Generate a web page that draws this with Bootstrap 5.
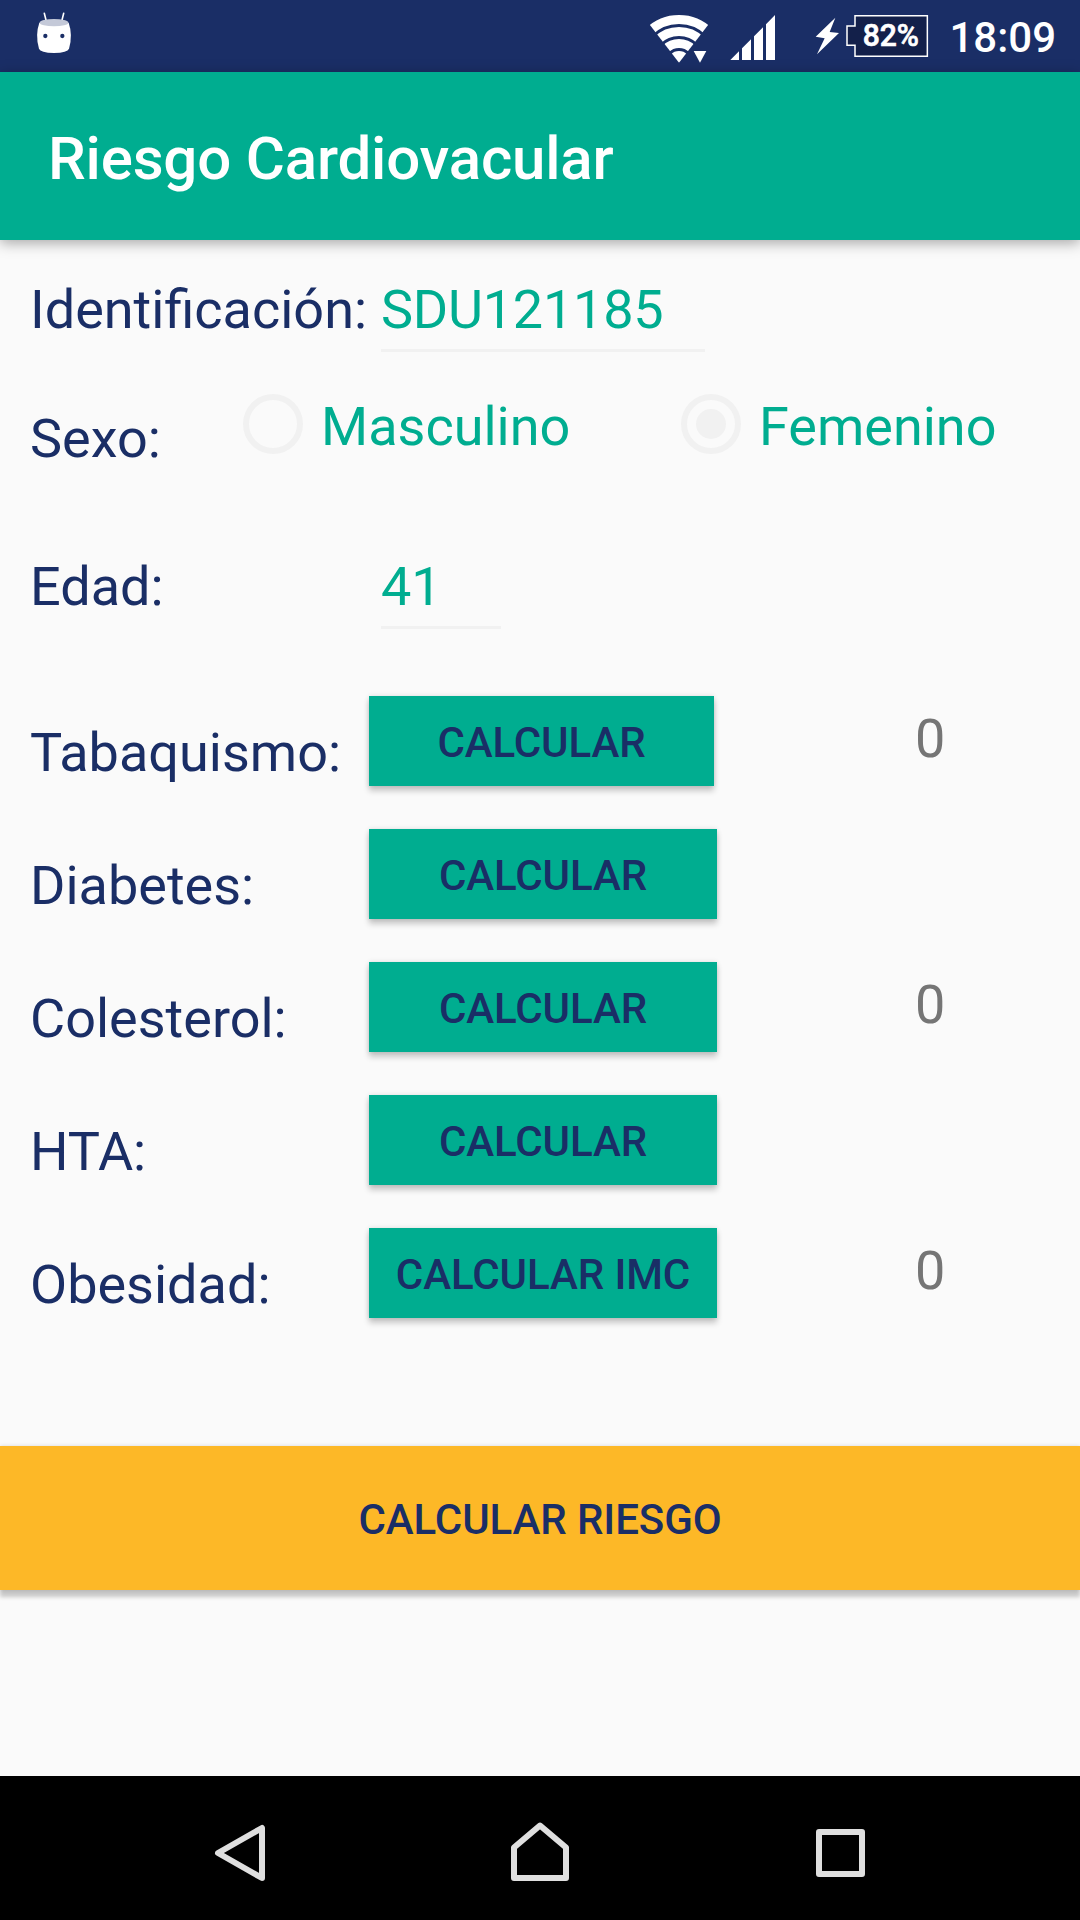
<!DOCTYPE html>
<html lang="es">
<head>
<meta charset="utf-8">
<meta name="viewport" content="width=device-width, initial-scale=1">
<title>Riesgo Cardiovacular</title>
<link rel="stylesheet" href="https://cdn.jsdelivr.net/npm/bootstrap@5.3.0/dist/css/bootstrap.min.css">
<style>
  :root { --navy: #1a2e66; --green: #00ad90; --amber: #fdb827; --hairline: #f1f1f1; }
  body { font-family: Roboto, "Noto Sans", sans-serif; background: #fafafa; color: var(--navy); font-size: 54px; line-height: 64px; height: 1920px; overflow: hidden; }
  svg { display: block; flex: none; }
  .status-bar { height: 72px; background: var(--navy); padding: 0 24px 0 35px; }
  .clock { font-size: 42px; font-weight: 500; line-height: 48px; padding-top: 14px; margin-left: 13px; }
  .app-bar { height: 168px; background: var(--green); padding: 6px 48px 0; box-shadow: 0 3px 13px rgba(0,0,0,.34); z-index: 1; }
  .app-title { font-size: 60px; font-weight: 500; line-height: 72px; letter-spacing: -.18px; }
  .form-area { height: 1206px; padding-left: 30px; }
  .lbl { width: 339px; }
  .id-row { height: 150px; padding-top: 38px; }
  .sex-row { height: 165px; padding-top: 1px; }
  .age-row { height: 141px; }
  .calc-row { height: 133px; }
  .calc-row .lbl { padding-top: 25px; }
  .score { padding-top: 11px; margin-left: auto; width: 165px; color: #757575; }
  .field { margin-left: 12px; color: var(--green); border-bottom: 3px solid var(--hairline); height: 74px; }
  .field-id { width: 324px; letter-spacing: -.25px; }
  .field-age { width: 120px; }
  .sex-lbl { width: 213px; }
  .choice { width: 438px; color: var(--green); padding-top: 3px; }
  .choice:last-child { width: 380px; }
  .choice-txt { padding: 1px 0 0 18px; }
  .dot-ring { width: 60px; height: 60px; border: 6px solid var(--hairline); border-radius: 50%; }
  .dot-core { width: 30px; height: 30px; background: var(--hairline); border-radius: 50%; }
  .flat-btn { font-size: 42px; font-weight: 500; line-height: 48px; letter-spacing: -.08px; color: var(--navy); border: 0; border-radius: 0; padding: 0; }
  .calc-btn { width: 348px; height: 90px; background: var(--green); padding-top: 3px; box-shadow: 0 5px 6px rgba(0,0,0,.2), 0 0 5px rgba(0,0,0,.12); }
  .calc-btn.first { width: 345px; }
  .risk-btn { height: 144px; background: var(--amber); padding-top: 3px; box-shadow: 0 7px 4px rgba(0,0,0,.2), 0 0 4px rgba(0,0,0,.14); }
  .nav-keys { height: 144px; background: #000; padding: 8px 214px 0; }
</style>
</head>
<body class="d-flex flex-column m-0">
  <header class="status-bar d-flex align-items-start text-white flex-shrink-0">
    <svg width="38" height="54" viewBox="105 0 114 162">
      <g stroke="#fff" stroke-width="5" stroke-linecap="round"><path d="M133 40l6 24M191 40l-6 24"/></g>
      <path fill="#fff" d="M118 68Q105 105 117 146Q121 158 162 159Q203 158 207 146Q219 105 206 68Z"/>
      <ellipse cx="162" cy="68" rx="43" ry="11" fill="#c4c9d8"/>
      <circle cx="136" cy="108" r="6.500" fill="#1a2e66"/><circle cx="187" cy="108" r="6.500" fill="#1a2e66"/>
    </svg>
    <div class="d-flex ms-auto">
      <svg width="306" height="72" viewBox="0 0 918 216">
        <defs><clipPath id="fan"><path d="M147 188L31.500 38L31.500 0H262.500V38Z"/></clipPath></defs>
        <g clip-path="url(#fan)" fill="none" stroke="#fff" stroke-width="27">
          <circle cx="147" cy="188" r="129.500"/><circle cx="147" cy="188" r="93.500"/><circle cx="147" cy="188" r="57.500"/>
          <circle cx="147" cy="188" r="35" fill="#fff" stroke="none"/>
        </g>
        <g fill="#fff">
          <path d="M191 153H229L210 188Z"/>
          <path d="M301 180L327 154V180ZM336 145L363 118V180H336ZM372 109L399 82V180H372ZM408 73L435 45V180H408Z"/>
          <path d="M616 53L557 110L584 115L561 163L627 99L599 96Z"/>
        </g>
        <path d="M675 47H892V168.500H675V136H651V78H675Z" fill="#13204a" stroke="#fff" stroke-width="4.500"/>
        <text x="698" y="139" font-size="94" font-weight="500" fill="#fff" stroke="#fff" stroke-width="2" textLength="169" lengthAdjust="spacingAndGlyphs">82%</text>
      </svg>
      <span class="clock">18:09</span>
    </div>
  </header>
  <nav class="app-bar d-flex align-items-center text-white flex-shrink-0">
    <span class="app-title">Riesgo Cardiovacular</span>
  </nav>
  <main class="form-area flex-shrink-0">
    <div class="id-row d-flex align-items-start"><span class="lbl text-nowrap">Identificación:</span><span class="field field-id">SDU121185</span></div>
    <div class="sex-row d-flex align-items-start">
      <span class="sex-lbl pt-3 flex-shrink-0">Sexo:</span>
      <div class="d-flex">
        <div class="choice d-flex align-items-start flex-shrink-0"><span class="dot-ring"></span><span class="choice-txt">Masculino</span></div>
        <div class="choice d-flex align-items-start"><span class="dot-ring d-flex align-items-center justify-content-center"><span class="dot-core"></span></span><span class="choice-txt">Femenino</span></div>
      </div>
    </div>
    <div class="age-row d-flex align-items-start"><span class="lbl">Edad:</span><span class="field field-age">41</span></div>
    <div class="calc-row d-flex align-items-start"><span class="lbl">Tabaquismo:</span><button class="btn flat-btn calc-btn first">CALCULAR</button><span class="score">0</span></div>
    <div class="calc-row d-flex align-items-start"><span class="lbl">Diabetes:</span><button class="btn flat-btn calc-btn">CALCULAR</button></div>
    <div class="calc-row d-flex align-items-start"><span class="lbl">Colesterol:</span><button class="btn flat-btn calc-btn">CALCULAR</button><span class="score">0</span></div>
    <div class="calc-row d-flex align-items-start"><span class="lbl">HTA:</span><button class="btn flat-btn calc-btn">CALCULAR</button></div>
    <div class="calc-row d-flex align-items-start"><span class="lbl">Obesidad:</span><button class="btn flat-btn calc-btn">CALCULAR IMC</button><span class="score">0</span></div>
  </main>
  <button class="btn flat-btn risk-btn w-100 flex-shrink-0">CALCULAR RIESGO</button>
  <footer class="nav-keys d-flex align-items-center justify-content-between mt-auto flex-shrink-0">
    <svg width="52" height="58" viewBox="214 1823 52 58" fill="none" stroke="#dfdfdf" stroke-width="6" stroke-linejoin="round"><path d="M218 1853L262 1828V1878Z"/></svg>
    <svg width="60" height="62" viewBox="511 1821 60 62" fill="none" stroke="#dfdfdf" stroke-width="6" stroke-linejoin="round"><path d="M514 1847.500L540 1825.500L566 1847.500V1878H514Z"/></svg>
    <svg width="50" height="50" viewBox="816 1827 50 50" fill="none" stroke="#dfdfdf" stroke-width="6" stroke-linejoin="round"><path d="M819 1832H862V1874H819Z"/></svg>
  </footer>
<script src="https://cdn.jsdelivr.net/npm/bootstrap@5.3.0/dist/js/bootstrap.bundle.min.js"></script>
</body>
</html>
